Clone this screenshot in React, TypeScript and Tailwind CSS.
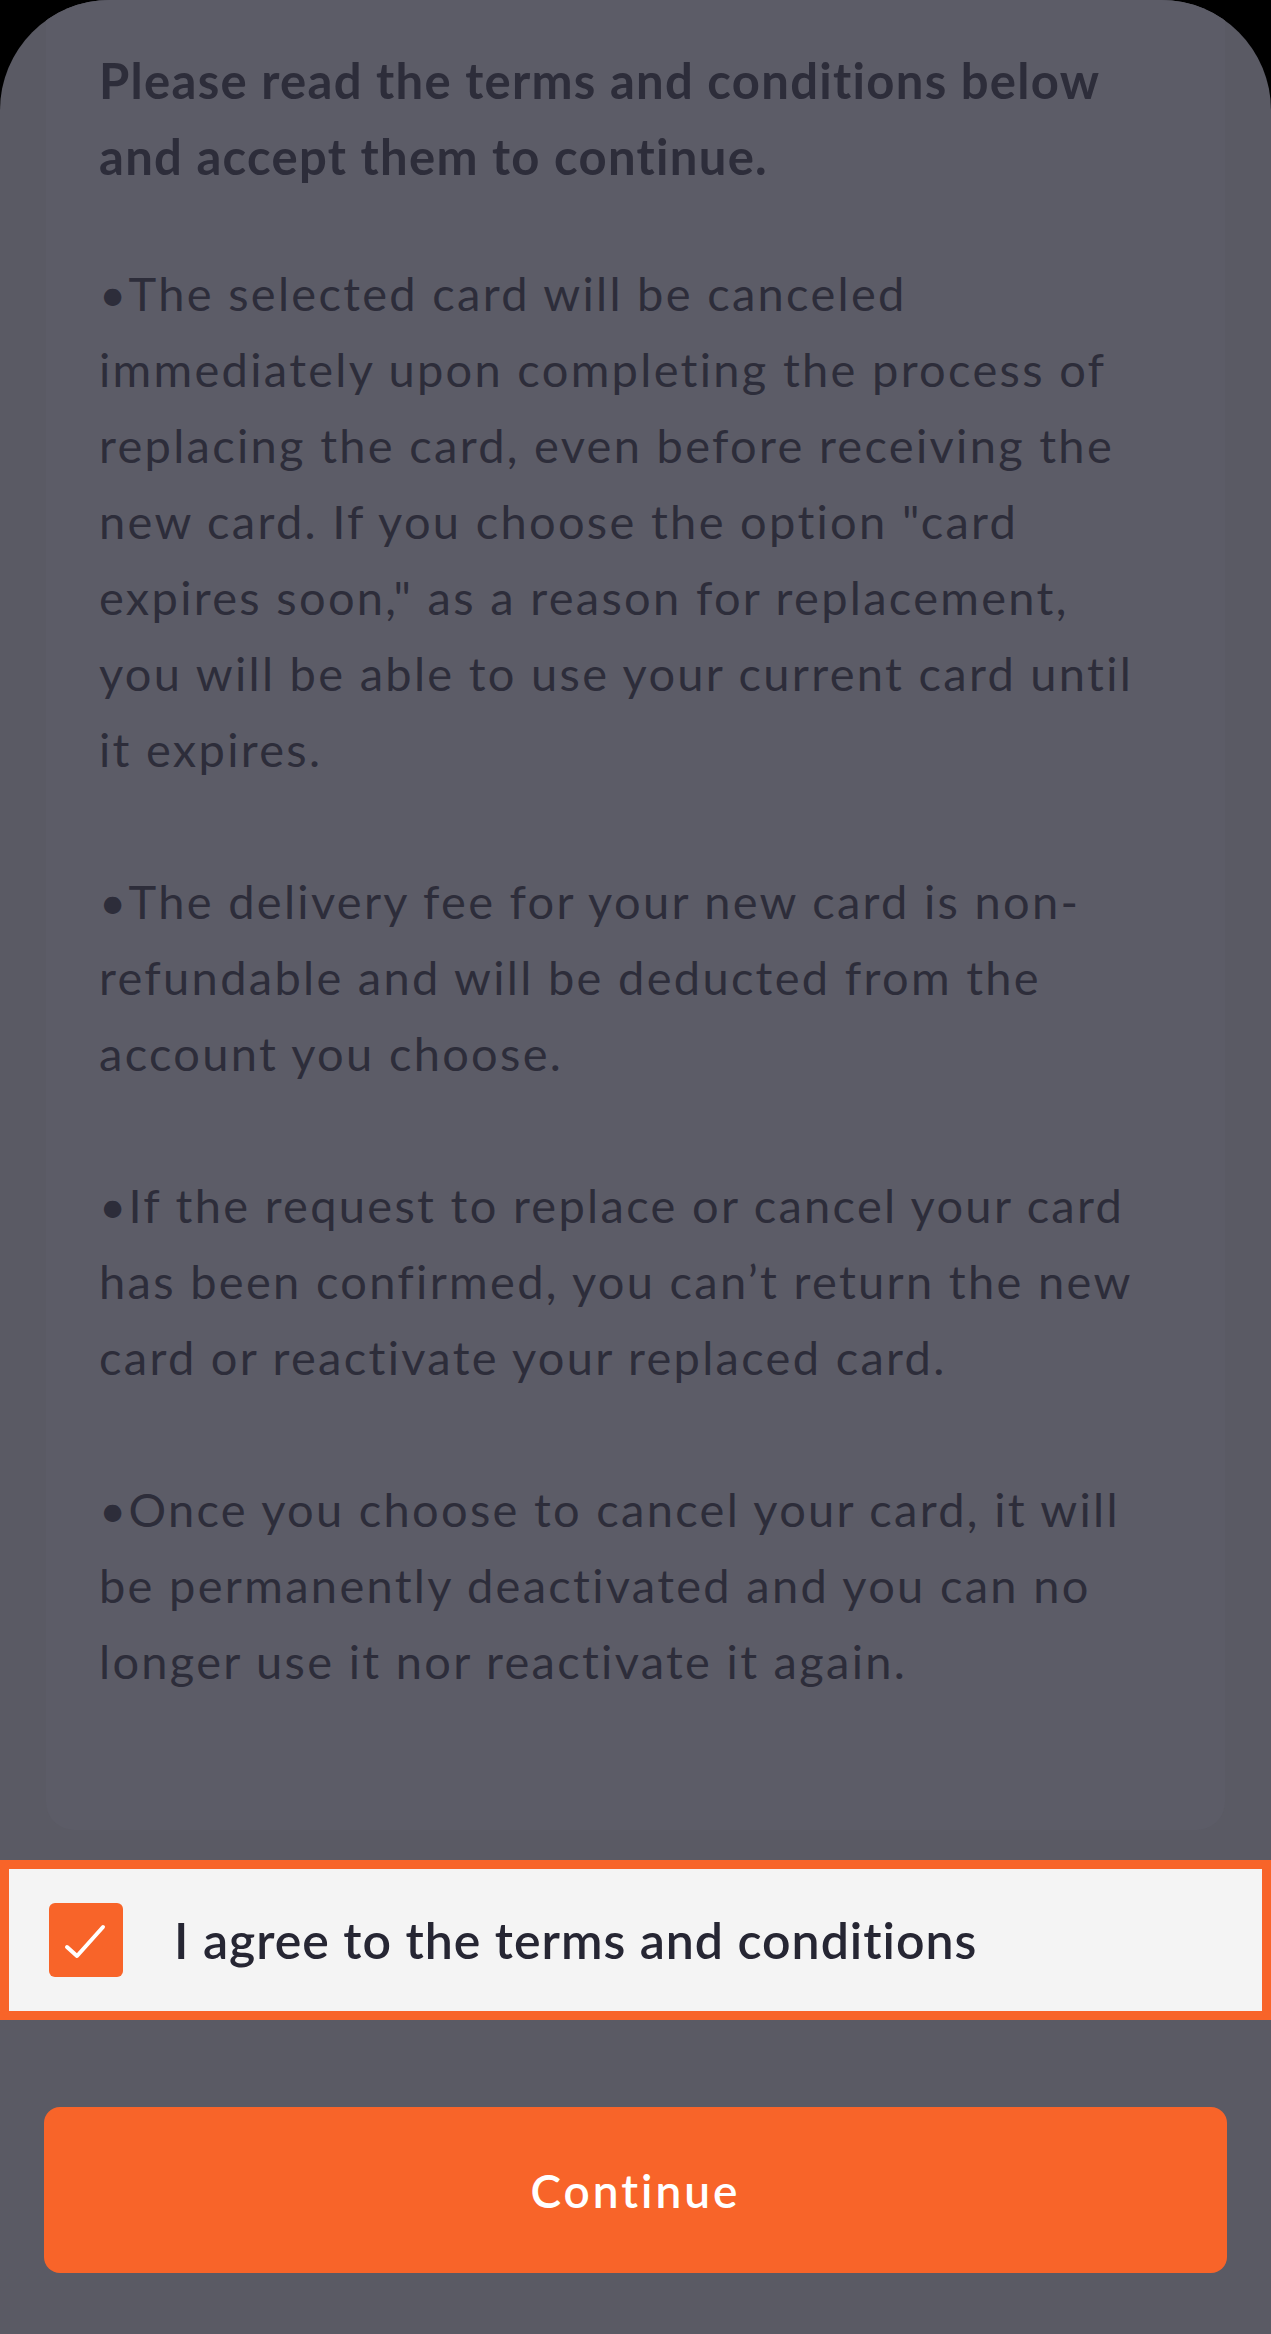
const heading = ["Please read the terms and conditions below", "and accept them to continue."];

const paragraphs = [
  [
    "•The selected card will be canceled",
    "immediately upon completing the process of",
    "replacing the card, even before receiving the",
    'new card. If you choose the option "card',
    'expires soon," as a reason for replacement,',
    "you will be able to use your current card until",
    "it expires.",
  ],
  [
    "•The delivery fee for your new card is non-",
    "refundable and will be deducted from the",
    "account you choose.",
  ],
  [
    "•If the request to replace or cancel your card",
    "has been confirmed, you can’t return the new",
    "card or reactivate your replaced card.",
  ],
  [
    "•Once you choose to cancel your card, it will",
    "be permanently deactivated and you can no",
    "longer use it nor reactivate it again.",
  ],
];

export default function App() {
  return (
    <div className="min-h-[2334px] bg-black" style={{ fontFamily: "Lato, 'Open Sans', sans-serif" }}>
      <div className="min-h-[2334px] rounded-t-[110px] bg-[#5a5a64] flex flex-col overflow-hidden">
        {/* Terms card */}
        <div className="mx-[46px] rounded-b-[28px] bg-[#5c5c67] pl-[53px] pt-[42px] pb-[131px] text-[#2d2d3a]">
          <h1 className="text-[49px] leading-[76px] font-bold tracking-[1.3px]">
            {heading.map((line) => (
              <span key={line} className="block whitespace-nowrap">
                {line}
              </span>
            ))}
          </h1>
          <div className="mt-[61px] text-[47px] leading-[76px] tracking-[2.3px]">
            {paragraphs.map((para, i) => (
              <div key={i} className={i > 0 ? "mt-[76px]" : ""}>
                {para.map((line) => (
                  <span key={line} className="block whitespace-nowrap">
                    {line}
                  </span>
                ))}
              </div>
            ))}
          </div>
        </div>

        {/* Agree checkbox */}
        <label className="mt-[30px] h-[160px] border-[9px] border-[#f86429] bg-[#f4f4f4] flex items-center pl-[40px] gap-[51px]">
          <span className="w-[74px] h-[74px] rounded-[6px] bg-[#f86429] block">
            <svg width="74" height="74" viewBox="0 0 74 74" fill="none">
              <path d="M18 44 L28 53 L54 24" stroke="white" strokeWidth="4" strokeLinecap="round" strokeLinejoin="round" />
            </svg>
          </span>
          <span className="text-[50px] font-semibold tracking-[1px] text-[#262633] whitespace-nowrap">
            I agree to the terms and conditions
          </span>
        </label>

        {/* Continue */}
        <button className="mx-[44px] mt-[87px] h-[166px] rounded-[16px] bg-[#f86429] text-white text-[46px] font-semibold tracking-[3px]">
          Continue
        </button>
      </div>
    </div>
  );
}
